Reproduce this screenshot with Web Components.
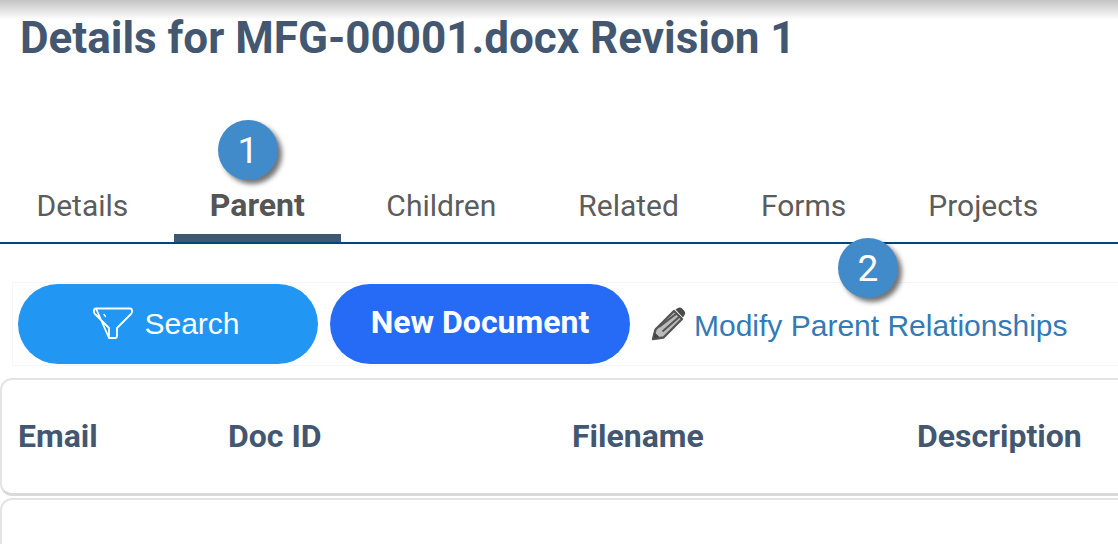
<!DOCTYPE html>
<html lang="en">
<head>
<meta charset="utf-8">
<title>Document details</title>
<style>
    html, body { margin: 0; height: 100%; overflow: hidden; background: #fff; }
    body { font-family: 'Roboto', sans-serif; }
</style>
</head>
<body>
<details-page></details-page>
<script>
class StepBadge extends HTMLElement {
    constructor() {
        super();
        this.attachShadow({ mode: 'open' });
        this.shadowRoot.innerHTML = `
        <style>
            :host {
                box-sizing: border-box; position: absolute; z-index: 2; display: flex; align-items: center; justify-content: center;
                width: 60px; height: 60px; padding-top: 1px; border-radius: 50%; background: #428bca; color: #fff;
                font: 37px/59px 'Roboto', sans-serif;
                box-shadow: 4px 4px 5px rgba(0,0,0,0.55);
            }
        </style>
        <slot></slot>`;
    }
}

class TabItem extends HTMLElement {
    constructor() {
        super();
        this.attachShadow({ mode: 'open' });
        this.shadowRoot.innerHTML = `
        <style>
            :host {
                position: relative; display: block; padding: 0 36.5px 18px; margin-right: 9px;
                font: 400 30px/36px 'Roboto', sans-serif; color: #5c5c5c; white-space: nowrap;
            }
            :host([active]) {
                padding: 0 36px 11px; border-bottom: 8px solid #3f5871;
                font-weight: 700; font-size: 32px; line-height: 35px; color: #555;
            }
        </style>
        <slot></slot>`;
    }
}

class TabBar extends HTMLElement {
    constructor() {
        super();
        this.attachShadow({ mode: 'open' });
        this.shadowRoot.innerHTML = `
        <style>
            :host { display: flex; margin-top: 127px; border-bottom: 2px solid #00457c; }
        </style>
        <slot></slot>`;
    }
}

class PillButton extends HTMLElement {
    constructor() {
        super();
        this.attachShadow({ mode: 'open' });
        this.shadowRoot.innerHTML = `
        <style>
            :host {
                box-sizing: border-box; display: flex; align-items: center; justify-content: center; gap: 11px;
                width: 300px; height: 80px; padding-right: 3px; border-radius: 40px; background: #2196f3; color: #fff;
                font: 30px/36px 'Liberation Sans', sans-serif;
            }
            :host([primary]) { background: #256bf6; font: 700 32px/36px 'Roboto', sans-serif; padding: 0 0 5px; }
            ::slotted(svg) { display: block; }
        </style>
        <slot></slot>`;
    }
}

class ActionToolbar extends HTMLElement {
    constructor() {
        super();
        this.attachShadow({ mode: 'open' });
        this.shadowRoot.innerHTML = `
        <style>
            :host {
                display: flex; align-items: center; gap: 12px; margin: 38px 0 12px 12px; padding: 1px 5px;
                border: 1px solid #f6f6f6; border-right: 0;
            }
            a {
                display: flex; align-items: center; gap: 8px; margin-left: 9px; padding-top: 4px;
                font: 30px/36px 'Liberation Sans', sans-serif; color: #337ab7; white-space: nowrap; text-decoration: none;
            }
            svg { display: block; margin-top: -5px; }
        </style>
        <slot></slot>
        <a href="#">
            <svg width="35" height="34" viewBox="0 0 35 34">
                <g fill="none" stroke="#555" stroke-linejoin="round">
                    <path d="M2 32 L4.5 22.5 L23 4 L31 12 L12.5 30.5 Z" stroke-width="2.4" fill="#bbb"/>
                    <path d="M8 20 L25 7 M11.5 24.5 L28 10" stroke-width="2"/>
                    <path d="M2 32 L3.5 25.5 L8.5 30.5 Z" fill="#444" stroke-width="1"/>
                </g>
                <path d="M24.5 2.5 L27 1 Q29 0 31 1.5 L33 3.5 Q35 6 33.5 8 L32 10.5 Z" fill="#4a4a4a"/>
            </svg>
            Modify Parent Relationships
        </a>`;
    }
}

class GridCard extends HTMLElement {
    constructor() {
        super();
        this.attachShadow({ mode: 'open' });
        this.shadowRoot.innerHTML = `
        <style>
            :host {
                display: grid; grid-template-columns: 210px 344px 345px 1fr; align-items: center;
                box-sizing: border-box; width: 1140px; height: 118px; padding: 0 16px 1px 16px; margin-bottom: 2px;
                border: 2px solid #e4e4e4; border-bottom: 3px solid #d9d9d9; border-radius: 12px; background: #fff;
                font: 700 32px/36px 'Roboto', sans-serif; color: #435870;
            }
            :host([empty]) { height: 200px; }
        </style>
        <slot></slot>`;
    }
}

class DetailsPage extends HTMLElement {
    constructor() {
        super();
        this.attachShadow({ mode: 'open' });
        this.tabs = ['Details', 'Parent', 'Children', 'Related', 'Forms', 'Projects'];
        this.columns = ['Email', 'Doc ID', 'Filename', 'Description'];
    }

    connectedCallback() {
        this.render();
    }

    render() {
        const tabs = this.tabs.map(t => `<tab-item ${t === 'Parent' ? 'active' : ''}>${t}</tab-item>`).join('');
        const cols = this.columns.map(c => `<span>${c}</span>`).join('');
        this.shadowRoot.innerHTML = `
        <style>
            :host { position: relative; display: block; height: 544px; overflow: hidden; }
            .top-shade {
                position: absolute; top: 0; left: 0; right: 0; height: 20px;
                background: linear-gradient(#c4c4c4, rgba(255,255,255,0));
            }
            h1 {
                margin: 0; padding: 15px 0 0 20px;
                font: 700 44px/46px 'Roboto', sans-serif; color: #435870; white-space: nowrap;
            }
            .one { left: 218px; top: 120px; }
            .two { left: 838px; top: 238px; }
        </style>
        <div class="top-shade"></div>
        <h1>Details for MFG-00001.docx Revision 1</h1>
        <step-badge class="one">1</step-badge>
        <step-badge class="two">2</step-badge>
        <tab-bar>${tabs}</tab-bar>
        <action-toolbar>
            <pill-button>
                <svg width="40" height="34" viewBox="0 0 40 34" fill="none" stroke="#fff" stroke-width="1.8" stroke-linecap="round" stroke-linejoin="round">
                    <path d="M3 1.5 H37 Q39 1.5 39 3.5 V5 Q39 6 38 7 L24 21 V27 M16 31 V21 L2 7 Q1 6 1 5 V3.5 Q1 1.5 3 1.5 Z M16 31 H22 Q24 31 24 29 V27"/>
                    <path d="M11 7.5 L12.5 9.5" stroke-width="1.4"/>
                </svg>
                Search
            </pill-button>
            <pill-button primary>New Document</pill-button>
        </action-toolbar>
        <grid-card>${cols}</grid-card>
        <grid-card empty></grid-card>`;
    }
}

customElements.define('step-badge', StepBadge);
customElements.define('tab-item', TabItem);
customElements.define('tab-bar', TabBar);
customElements.define('pill-button', PillButton);
customElements.define('action-toolbar', ActionToolbar);
customElements.define('grid-card', GridCard);
customElements.define('details-page', DetailsPage);
</script>
</body>
</html>
